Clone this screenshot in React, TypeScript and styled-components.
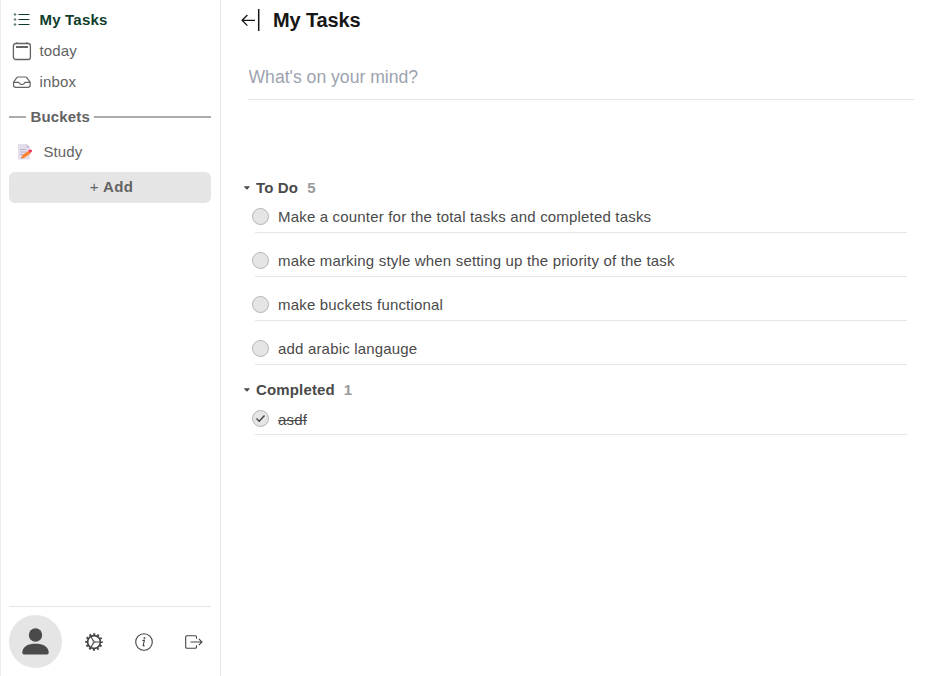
import React from "react";
import styled, { createGlobalStyle } from "styled-components";

const GlobalStyle = createGlobalStyle`
  * { box-sizing: border-box; }
  body {
    margin: 0;
    background: #fff;
    color: #4a4a4a;
    font-family: "Liberation Sans", Arial, sans-serif;
    font-size: 15px;
  }
`;

const Page = styled.div`
  display: flex;
  height: 676px;
  overflow: hidden;
`;

const Sidebar = styled.aside`
  display: flex;
  flex: none;
  flex-direction: column;
  width: 221px;
  padding: 4px 9px 0 8px;
  border-left: 1px solid #ececec;
  border-right: 1px solid #e5e5e5;
`;

const NavItem = styled.a<{ $active?: boolean }>`
  display: flex;
  align-items: center;
  gap: 7.5px;
  height: 31px;
  padding-left: 3px;
  color: ${(p) => (p.$active ? "#0f3d2e" : "#636363")};
  font-weight: ${(p) => (p.$active ? 700 : 400)};
  letter-spacing: ${(p) => (p.$active ? "0.2px" : "0.15px")};
  svg { flex: none; }
`;

const BucketsTitle = styled.h2`
  display: flex;
  align-items: center;
  gap: 4.5px;
  height: 20px;
  margin: 10px 0 0;
  padding-bottom: 1px;
  color: #636363;
  font-size: 15px;
  letter-spacing: 0.15px;
  &::before, &::after {
    content: "";
    height: 2px;
    background: #acacac;
  }
  &::before { width: 17px; }
  &::after { flex: 1; }
`;

const Bucket = styled.a`
  display: flex;
  align-items: center;
  gap: 10.5px;
  height: 30px;
  margin-top: 10px;
  padding: 0 0 1px 8px;
  color: #636363;
  letter-spacing: 0.1px;
`;

const AddButton = styled.button`
  height: 31px;
  margin-top: 5px;
  padding: 0 0 2px 3px;
  border: 0;
  border-radius: 6px;
  background: #e5e5e5;
  color: #636363;
  font: 700 15px "Liberation Sans", Arial, sans-serif;
  letter-spacing: 0.4px;
  span { font-weight: 400; }
`;

const Footer = styled.footer`
  display: flex;
  align-items: center;
  height: 70px;
  margin-top: auto;
  border-top: 1px solid #e5e5e5;
  color: #444;
`;

const Avatar = styled.div`
  display: grid;
  flex: none;
  place-items: center;
  width: 53px;
  height: 53px;
  margin-right: 22px;
  border-radius: 50%;
  background: #e5e5e5;
`;

const FooterIcon = styled.span`
  display: grid;
  flex: none;
  place-items: center;
  width: 20px;
  height: 20px;
  margin-right: 30px;
`;

const Main = styled.main`
  flex: 1;
  padding: 0 25px 0 20px;
`;

const Header = styled.header`
  display: flex;
  align-items: center;
  gap: 13px;
  height: 40px;
`;

const Title = styled.h1`
  margin: 0;
  color: #161616;
  font-size: 20px;
  letter-spacing: -0.15px;
`;

const TaskInput = styled.input`
  display: block;
  width: 666px;
  height: 46px;
  margin: 14px 0 76px 7px;
  padding: 2px 0 0 0.5px;
  border: 0;
  border-bottom: 1px solid #e5e5e5;
  outline: 0;
  font: 17.6px "Liberation Sans", Arial, sans-serif;
  &::placeholder { color: #9ca3af; opacity: 1; }
`;

const SectionTitle = styled.h3`
  display: flex;
  align-items: center;
  height: 22px;
  margin: 0;
  padding-left: 3px;
  font-size: 15px;
  letter-spacing: 0.15px;
  svg { margin: 2px 6px 0 0; }
`;

const Count = styled.span<{ $gap: number }>`
  margin-left: ${(p) => p.$gap}px;
  color: #999;
`;

const TaskList = styled.ul`
  display: flex;
  flex-direction: column;
  gap: 9px;
  margin: 0;
  padding: 0 0 0 11px;
  list-style: none;
`;

const Task = styled.li`
  display: flex;
  align-items: center;
  gap: 9px;
  height: 35px;
  padding-top: 2px;
  letter-spacing: 0.18px;
  background: linear-gradient(#e5e5e5, #e5e5e5) 3px 100% / 652px 1px no-repeat;
`;

const TaskText = styled.span<{ $done?: boolean }>`
  padding-top: ${(p) => (p.$done ? "2px" : "0")};
  text-decoration: ${(p) => (p.$done ? "line-through" : "none")};
`;

const Checkbox = styled.span`
  display: grid;
  place-items: center;
  width: 17px;
  height: 17px;
  border: 1px solid #b4b4b4;
  border-radius: 50%;
  background: #e5e5e5;
`;

const Completed = styled.section`
  margin-top: 13px;
`;

const ListIcon = () => (
  <svg width="20" height="20" viewBox="0 0 20 20" fill="none" stroke="currentColor">
    <path d="M6.5 4.5h11M6.5 9.5h11M6.5 14.5h11" strokeWidth="1.1" />
    <g strokeWidth="0.8">
      <circle cx="3" cy="4.5" r="0.8" />
      <circle cx="3" cy="9.5" r="0.8" />
      <circle cx="3" cy="14.5" r="0.8" />
    </g>
  </svg>
);

const CalendarIcon = () => (
  <svg width="20" height="20" viewBox="0 0 20 20" fill="none" stroke="currentColor">
    <rect x="1.4" y="2.5" width="17" height="16" rx="2.3" strokeWidth="1.3" />
    <path d="M4 6h12" strokeWidth="2" />
    <path d="M5 1v2M15 1v2" />
  </svg>
);

const InboxIcon = () => (
  <svg width="20" height="20" viewBox="0 0 20 20" fill="none" stroke="currentColor" strokeWidth="1.2" strokeLinejoin="round">
    <path d="M1.5 10.3 4.8 5.6Q5.2 5 6 5H13.5Q14.3 5 14.8 5.6L18.2 10.3V13Q18.2 15.3 15.8 15.3H3.9Q1.5 15.3 1.5 13Z" />
    <path d="M1.5 10.3H6.3Q7 10.3 7.4 11.2Q8 12.4 9.8 12.4Q11.7 12.4 12.3 11.2Q12.7 10.3 13.4 10.3H18.2" />
  </svg>
);

const MemoIcon = () => (
  <svg width="16" height="16" viewBox="0 0 16 16">
    <path d="M1 0h8.5l3.5 3.5V15.5H1z" fill="#e3ddec" />
    <path d="M9.5 0v3.5H13z" fill="#c5bdd4" />
    <path d="M3 5.5h6M3 8h6M3 10.5h4" stroke="#bdb5c9" />
    <path d="m4.3 14.5 1-3.3 6.3-4.5 2 2.9L7 14z" fill="#ff822d" />
    <path d="m11.3 6.5 1.5-1q1-.4 1.9.6.9 1-.1 2L13.3 9z" fill="#f92f60" />
    <path d="m4.3 14.5.4-1.3.9.9z" fill="#8a6a80" />
  </svg>
);

const PersonIcon = () => (
  <svg width="27" height="27" viewBox="0 0 27 27" fill="#4a4a4a">
    <circle cx="13.5" cy="7" r="6.7" />
    <path d="M.3 24.5C.6 18 6.5 15.7 13.5 15.7S26.4 18 26.7 24.5Q26.7 26.5 25 26.5H2Q.3 26.5.3 24.5Z" />
  </svg>
);

const CogIcon = () => (
  <svg width="20" height="20" viewBox="0 0 20 20" fill="none" stroke="currentColor">
    <circle cx="10" cy="10" r="6.4" strokeWidth="1.7" />
    <circle cx="10" cy="10" r="7.9" strokeWidth="1.7" strokeDasharray="2.068 2.068" strokeDashoffset="1.034" />
    <path d="M10 10h6M10 10 7 4.8M10 10l-3 5.2" strokeWidth="1.1" />
    <circle cx="10" cy="10" r="1" fill="#fff" strokeWidth="0.8" />
  </svg>
);

const InfoIcon = () => (
  <svg width="20" height="20" viewBox="0 0 20 20" fill="none" stroke="currentColor">
    <circle cx="10" cy="10" r="8.3" strokeWidth="1.1" />
    <path d="M8.4 8.5l2-.4-1.2 5.3q-.2 1.1 1.4.2" strokeWidth="1.1" />
    <circle cx="10.4" cy="5.9" r="0.9" fill="currentColor" stroke="none" />
  </svg>
);

const ExitIcon = () => (
  <svg width="20" height="20" viewBox="0 0 20 20" fill="none" stroke="currentColor" strokeWidth="1.1">
    <path d="M12.5 6.8V5Q12.5 3.7 11.2 3.7H3Q1.7 3.7 1.7 5V15Q1.7 16.3 3 16.3H11.2Q12.5 16.3 12.5 15V13.2" />
    <path d="M6.5 10H18M14.8 6.8 18 10l-3.2 3.2" />
  </svg>
);

const CollapseIcon = () => (
  <svg width="19" height="24" viewBox="0 0 19 24" fill="none" stroke="#161616">
    <path d="M14 12.3H1.2M6.4 7 1.1 12.3l5.3 5.3" strokeWidth="1.3" />
    <path d="M17.7 1v22" strokeWidth="1.5" />
  </svg>
);

const Caret = () => (
  <svg width="6" height="4" viewBox="0 0 6 4">
    <path d="M.2.2h5.4v.8L3 3.8.2 1z" fill="#4a4a4a" />
  </svg>
);

const CheckIcon = () => (
  <svg width="11" height="11" viewBox="0 0 11 11" fill="none" stroke="#444" strokeWidth="1.4">
    <path d="m1.5 5.5 2.7 2.7L9.5 2.5" />
  </svg>
);

const tasks = [
  "Make a counter for the total tasks and completed tasks",
  "make marking style when setting up the priority of the task",
  "make buckets functional",
  "add arabic langauge",
];

export default function App() {
  return (
    <Page>
      <GlobalStyle />
      <Sidebar>
        <NavItem $active><ListIcon />My Tasks</NavItem>
        <NavItem><CalendarIcon />today</NavItem>
        <NavItem><InboxIcon />inbox</NavItem>
        <BucketsTitle>Buckets</BucketsTitle>
        <Bucket><MemoIcon />Study</Bucket>
        <AddButton><span>+</span> Add</AddButton>
        <Footer>
          <Avatar><PersonIcon /></Avatar>
          <FooterIcon><CogIcon /></FooterIcon>
          <FooterIcon><InfoIcon /></FooterIcon>
          <FooterIcon><ExitIcon /></FooterIcon>
        </Footer>
      </Sidebar>
      <Main>
        <Header>
          <CollapseIcon />
          <Title>My Tasks</Title>
        </Header>
        <TaskInput placeholder="What's on your mind?" />
        <section>
          <SectionTitle><Caret />To Do<Count $gap={9}>5</Count></SectionTitle>
          <TaskList>
            {tasks.map((task) => (
              <Task key={task}><Checkbox /><TaskText>{task}</TaskText></Task>
            ))}
          </TaskList>
        </section>
        <Completed>
          <SectionTitle><Caret />Completed<Count $gap={9}>1</Count></SectionTitle>
          <TaskList>
            <Task><Checkbox><CheckIcon /></Checkbox><TaskText $done>asdf</TaskText></Task>
          </TaskList>
        </Completed>
      </Main>
    </Page>
  );
}
